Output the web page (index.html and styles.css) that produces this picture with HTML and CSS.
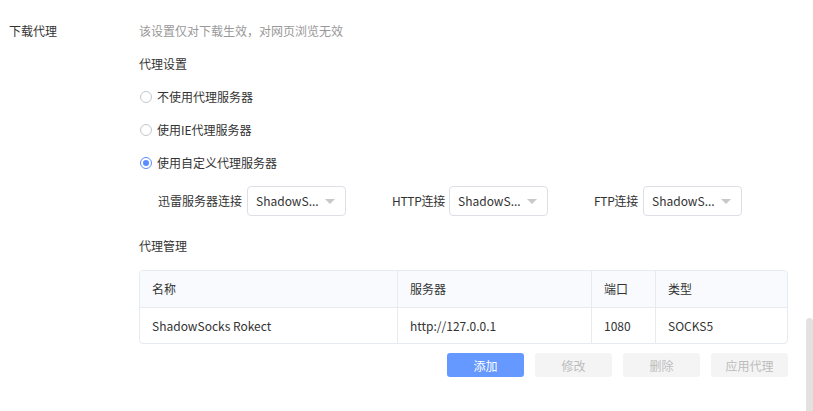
FILE: index.html
```html
<!DOCTYPE html>
<html lang="zh-CN">
<head>
<meta charset="utf-8">
<title>下载代理</title>
<link rel="stylesheet" href="styles.css">
</head>
<body>
<div class="page">
  <div class="label">下载代理</div>
  <div class="content">
    <div class="hint">该设置仅对下载生效，对网页浏览无效</div>
    <div class="section-title">代理设置</div>
    <div class="radio"><span class="dot"></span><span>不使用代理服务器</span></div>
    <div class="radio"><span class="dot"></span><span>使用IE代理服务器</span></div>
    <div class="radio checked"><span class="dot"></span><span>使用自定义代理服务器</span></div>
    <div class="selects">
      <div class="sel-group"><span class="sel-label">迅雷服务器连接</span><div class="select"><span>ShadowS...</span><i class="arrow"></i></div></div>
      <div class="sel-group"><span class="sel-label http">HTTP连接</span><div class="select"><span>ShadowS...</span><i class="arrow"></i></div></div>
      <div class="sel-group"><span class="sel-label ftp">FTP连接</span><div class="select"><span>ShadowS...</span><i class="arrow"></i></div></div>
    </div>
    <div class="section-title mgmt">代理管理</div>
    <div class="table">
      <div class="tr head">
        <div class="c1">名称</div><div class="c2">服务器</div><div class="c3">端口</div><div class="c4">类型</div>
      </div>
      <div class="tr">
        <div class="c1">ShadowSocks Rokect</div><div class="c2">http://127.0.0.1</div><div class="c3">1080</div><div class="c4">SOCKS5</div>
      </div>
    </div>
    <div class="buttons">
      <button class="btn primary">添加</button>
      <button class="btn">修改</button>
      <button class="btn">删除</button>
      <button class="btn">应用代理</button>
    </div>
  </div>
</div>
<div class="scroll-thumb"></div>
</body>
</html>
```

FILE: styles.css
```css
html, body {
  margin: 0;
  padding: 0;
  background: #fff;
}
body {
  font-family: "Noto Sans CJK SC", "Noto Sans", sans-serif;
  font-size: 12px;
  color: #333;
  line-height: 16px;
  width: 813px;
  height: 411px;
  overflow: hidden;
  position: relative;
}
.page {
  display: flex;
  padding-top: 23px;
}
.label {
  width: 130px;
  padding-left: 9px;
  flex: none;
}
.content {
  width: 649px;
  display: flex;
  flex-direction: column;
}
.hint {
  color: #999;
  height: 16px;
}
.section-title {
  margin-top: 17px;
  height: 16px;
}
.radio {
  display: flex;
  align-items: center;
  gap: 5px;
  margin-top: 17px;
  height: 16px;
}
.dot {
  width: 10px;
  height: 10px;
  border: 1px solid #c4c7cc;
  border-radius: 50%;
  margin-left: 1px;
  box-sizing: content-box;
  display: flex;
  align-items: center;
  justify-content: center;
}
.radio.checked .dot {
  border-color: #5b8cff;
}
.radio.checked .dot::after {
  content: "";
  width: 6px;
  height: 6px;
  border-radius: 50%;
  background: #5b8cff;
}
.selects {
  display: flex;
  gap: 46px;
  margin-top: 15px;
  padding-left: 19px;
}
.sel-group {
  display: flex;
  align-items: center;
  gap: 5px;
}
.sel-label {
  white-space: nowrap;
}
.sel-label.http {
  width: 52px;
  letter-spacing: -0.3px;
}
.sel-label.ftp {
  width: 44px;
  letter-spacing: -0.3px;
}
.select {
  height: 28px;
  border: 1px solid #dcdfe6;
  border-radius: 4px;
  display: flex;
  align-items: center;
  justify-content: space-between;
  padding: 0 10px 0 8px;
  box-sizing: content-box;
  width: 79px;
}
.arrow {
  width: 0;
  height: 0;
  border-left: 5px solid transparent;
  border-right: 5px solid transparent;
  border-top: 5px solid #c8c8c8;
}
.section-title.mgmt {
  margin-top: 22px;
}
.table {
  margin-top: 16px;
  border: 1px solid #e6ebf2;
  border-radius: 4px;
  overflow: hidden;
}
.tr {
  display: grid;
  grid-template-columns: 257px 194px 64px 1fr;
  height: 35px;
}
.tr.head {
  background: #f8fafd;
  height: 36px;
  border-bottom: 1px solid #e6ebf2;
}
.tr > div {
  display: flex;
  align-items: center;
  padding-left: 12px;
  border-left: 1px solid #e6ebf2;
}
.tr > div:first-child {
  border-left: none;
}
.buttons {
  display: flex;
  justify-content: flex-end;
  gap: 11px;
  margin-top: 9px;
}
.btn {
  width: 77px;
  height: 24px;
  border: none;
  border-radius: 3px;
  background: #f4f4f4;
  color: #bcbcbc;
  font-family: inherit;
  font-size: 12px;
  padding: 0;
}
.btn.primary {
  background: #6699ff;
  color: #fff;
}
.scroll-thumb {
  position: absolute;
  left: 806px;
  top: 318px;
  width: 7px;
  height: 93px;
  background: #e2e2e2;
  border-radius: 4px 4px 0 0;
}
```
